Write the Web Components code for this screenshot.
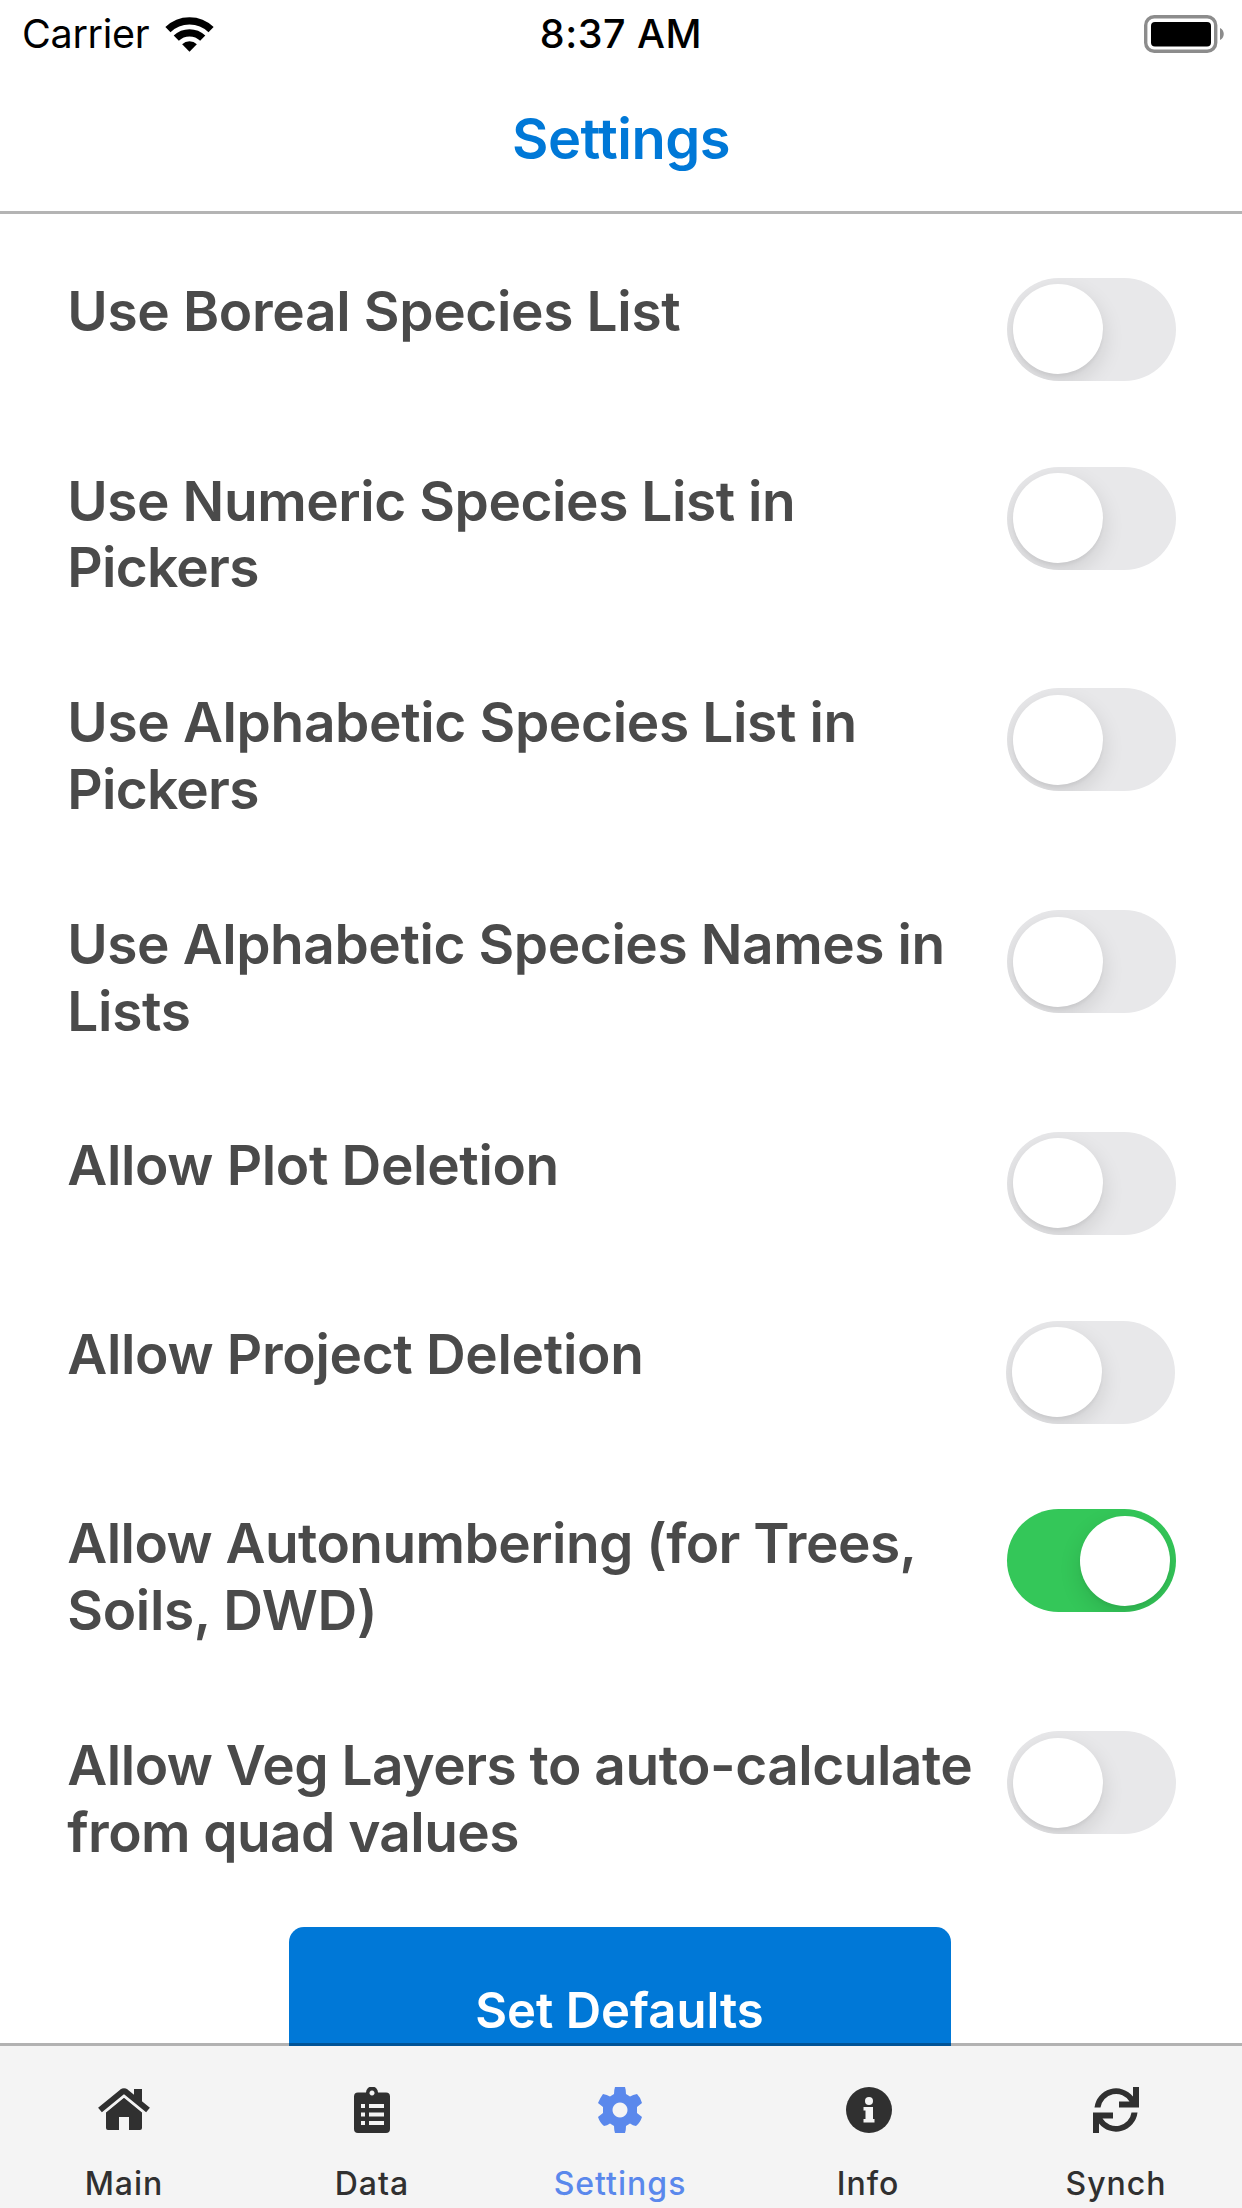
<!DOCTYPE html>
<html lang="en">
<head>
<meta charset="utf-8">
<title>Settings</title>
<style>
html,body{margin:0;padding:0;background:#fff}
body{font-family:Inter,"Liberation Sans",sans-serif;width:1242px;height:2208px;overflow:hidden}
</style>
</head>
<body>
<settings-app></settings-app>
<script>
const define = (name, html) => customElements.define(name, class extends HTMLElement {
  constructor() {
    super();
    const t = document.createElement('template');
    t.innerHTML = html;
    this.attachShadow({mode: 'open'}).append(t.content.cloneNode(true));
  }
});

define('status-bar', `
<style>
:host{display:grid;grid-template-columns:1fr auto 1fr;align-items:center;height:68px;color:#000;font-size:39.500px;line-height:68px;white-space:nowrap}
.left{display:flex;align-items:center;padding-left:22px;gap:16px}
.carrier{letter-spacing:-.3px}
.time{font-weight:500;letter-spacing:.5px}
.right{display:flex;justify-content:flex-end;padding-right:18px}
svg{display:block}
</style>
<div class="left"><span class="carrier">Carrier</span>
<svg width="49" height="36" viewBox="0 0 50 36"><g fill="none" stroke="#000" stroke-width="7.500"><path d="M3 13.500A31.500 31.500 0 0 1 47 13.500"/><path d="M11.500 22.300A19.300 19.300 0 0 1 38.500 22.300"/></g><path d="M17.500 28.500A10.700 10.700 0 0 1 32.500 28.500L25 36Z"/></svg></div>
<div class="time">8:37 AM</div>
<div class="right"><svg width="80" height="38" viewBox="0 0 80 38"><rect x="1.700" y="1.700" width="70" height="34.600" rx="8.500" fill="#fff" stroke="#8c8c8c" stroke-width="3.400"/><rect x="7" y="7" width="60" height="24.500" rx="4" fill="#000"/><path d="M76 13c5 2 5 10 0 12z" fill="#8c8c8c"/></svg></div>`);

define('nav-header', `
<style>
:host{display:flex;justify-content:center;align-items:center;box-sizing:border-box;height:146px;padding-bottom:2px;border-bottom:3px solid #b4b4b4;color:#0078d7;font-size:56px;font-weight:600;letter-spacing:-.5px}
</style><span><slot></slot></span>`);

define('toggle-switch', `
<style>
:host{display:flex;box-sizing:border-box;width:169px;height:103px;padding:6.500px 6px;border-radius:52px;background:#e8e8ea;overflow:hidden;flex:none}
:host([on]){background:#34c759;justify-content:flex-end}
i{width:90px;height:90px;border-radius:50%;background:#fff;box-shadow:0 8px 22px rgba(0,0,0,.12),0 3px 3px rgba(0,0,0,.04)}
</style><i></i>`);

define('setting-row', `
<style>
:host{display:flex;justify-content:space-between;align-items:flex-start;box-sizing:border-box;height:189.300px;padding:0 66px 0 67.300px;color:#4a4a4a}
:host([compact]){height:188.800px}
:host([lines="2"]){height:221.700px}
:host([lines="2"]) .label{padding-top:1px}
.label{font-size:55px;line-height:66.400px;font-weight:600;white-space:nowrap;display:flex;flex-direction:column}
</style><div class="label"><slot></slot></div><slot name="control"></slot>`);

define('primary-button', `
<style>
:host{display:flex;justify-content:center;box-sizing:border-box;width:662px;height:160px;padding-top:52px;border-radius:15px;background:#0078d7;color:#fff;font-size:49px;line-height:64px;font-weight:600}
</style><span><slot></slot></span>`);

define('tab-item', `
<style>
:host{display:flex;flex-direction:column;align-items:center;flex:1;color:#303030;font-size:32px;line-height:40px;font-weight:500;letter-spacing:1px}
.icon{height:50px;margin-top:39px;display:flex;align-items:center}
.text{margin-top:29px}
</style><div class="icon"><slot name="icon"></slot></div><div class="text"><slot></slot></div>`);

define('tab-bar', `
<style>:host{display:flex;box-sizing:border-box;height:165px;padding-right:2px;border-top:3px solid rgba(0,0,0,.3);background:#f4f4f4;background-clip:padding-box;position:relative}</style><slot></slot>`);

define('settings-app', `
<style>
:host{display:flex;flex-direction:column;height:2208px;background:#fff}
main{height:1832px;flex:none;overflow:hidden;box-sizing:border-box;padding-top:63.500px;display:flex;flex-direction:column}
main>*{flex:none}
primary-button{align-self:center;margin:-26px 3px 0 0}
tab-bar{margin-top:-3px;flex:none}
svg{display:block}
</style>
<status-bar></status-bar>
<nav-header>Settings</nav-header>
<main>
<setting-row><span style="letter-spacing:-.35px">Use Boreal Species List</span><toggle-switch slot="control"></toggle-switch></setting-row>
<setting-row lines="2"><span style="letter-spacing:-.44px">Use Numeric Species List in</span><span style="letter-spacing:-.75px">Pickers</span><toggle-switch slot="control"></toggle-switch></setting-row>
<setting-row lines="2"><span style="letter-spacing:-.36px">Use Alphabetic Species List in</span><span style="letter-spacing:-.75px">Pickers</span><toggle-switch slot="control"></toggle-switch></setting-row>
<setting-row lines="2"><span style="letter-spacing:-.43px">Use Alphabetic Species Names in</span><span style="letter-spacing:-.3px">Lists</span><toggle-switch slot="control"></toggle-switch></setting-row>
<setting-row compact><span style="letter-spacing:-.35px">Allow Plot Deletion</span><toggle-switch slot="control"></toggle-switch></setting-row>
<setting-row compact><span style="letter-spacing:-.33px">Allow Project Deletion</span><toggle-switch slot="control" style="margin-right:1.500px"></toggle-switch></setting-row>
<setting-row lines="2"><span style="letter-spacing:-.55px">Allow Autonumbering (for Trees,</span><span style="letter-spacing:-.35px">Soils, DWD)</span><toggle-switch slot="control" on></toggle-switch></setting-row>
<setting-row lines="2"><span style="letter-spacing:-.49px">Allow Veg Layers to auto-calculate</span><span style="letter-spacing:-.58px">from quad values</span><toggle-switch slot="control"></toggle-switch></setting-row>
<primary-button>Set Defaults</primary-button>
</main>
<tab-bar>
<tab-item><svg slot="icon" width="52" height="46" viewBox="0 0 52 46"><path fill="currentColor" d="M8 25 26 10 44 25V41Q44 43 42 43H31V30H21V43H10Q8 43 8 41Z"/><path fill="none" stroke="#f4f4f4" stroke-width="2" d="M4 27.500 26 9.500 48 27.500"/><path fill="none" stroke="currentColor" stroke-width="6" d="M2 23 24 5Q26 3.500 28 5L50 23"/><path fill="currentColor" d="M36 2h8v16l-8-7z"/></svg>Main</tab-item>
<tab-item><svg slot="icon" width="36" height="46" viewBox="0 0 36 46"><path fill="currentColor" fill-rule="evenodd" d="M4 5.500H12A6 6 0 0 1 24 5.500H32Q36 5.500 36 9.500V42Q36 46 32 46H4Q0 46 0 42V9.500Q0 5.500 4 5.500ZM18 3.500a2.500 2.500 0 1 0 .01 0ZM7 17v4h4v-4ZM15 17v4h15v-4ZM7 25.500v4h4v-4ZM15 25.500v4h15v-4ZM7 34v4h4v-4ZM15 34v4h15v-4Z"/></svg>Data</tab-item>
<tab-item style="color:#5a88ec"><svg slot="icon" width="46" height="46" viewBox="0 0 46 46"><path fill="currentColor" fill-rule="evenodd" d="M18 0H28Q29 3 29 7L33 9.500Q36 7.500 40 7Q44 11 45 16L40 20V26L45 30Q43 36 39 39Q36 38.500 33 36.500L29 39Q29 43 28 46H18Q17 43 17 39L13 36.500Q10 38.500 7 39Q3 36 1 30L6 26V20L1 16Q3 11 6 7Q10 7.500 13 9.500L17 7Q17 3 18 0ZM23 15.500a7.500 7.500 0 1 0 .01 0Z"/></svg>Settings</tab-item>
<tab-item><svg slot="icon" width="46" height="46" viewBox="0 0 46 46" style="margin-left:2px"><circle cx="23" cy="23" r="23" fill="currentColor"/><circle cx="23" cy="14" r="4" fill="#f4f4f4"/><path fill="#f4f4f4" d="M17.500 20H27V32H28.500V35.500H17.500V32H19.500V23.500H17.500Z"/></svg>Info</tab-item>
<tab-item><svg slot="icon" width="46" height="46" viewBox="0 0 46 46"><g fill="currentColor"><path d="M1.500 20.500A21.700 21.700 0 0 1 40 9.500V0H46V20.500H26V14.500H36.500A15.700 15.700 0 0 0 7.500 20.500Z"/><path transform="rotate(180 23 23)" d="M1.500 20.500A21.700 21.700 0 0 1 40 9.500V0H46V20.500H26V14.500H36.500A15.700 15.700 0 0 0 7.500 20.500Z"/></g></svg>Synch</tab-item>
</tab-bar>`);
</script>
</body>
</html>
